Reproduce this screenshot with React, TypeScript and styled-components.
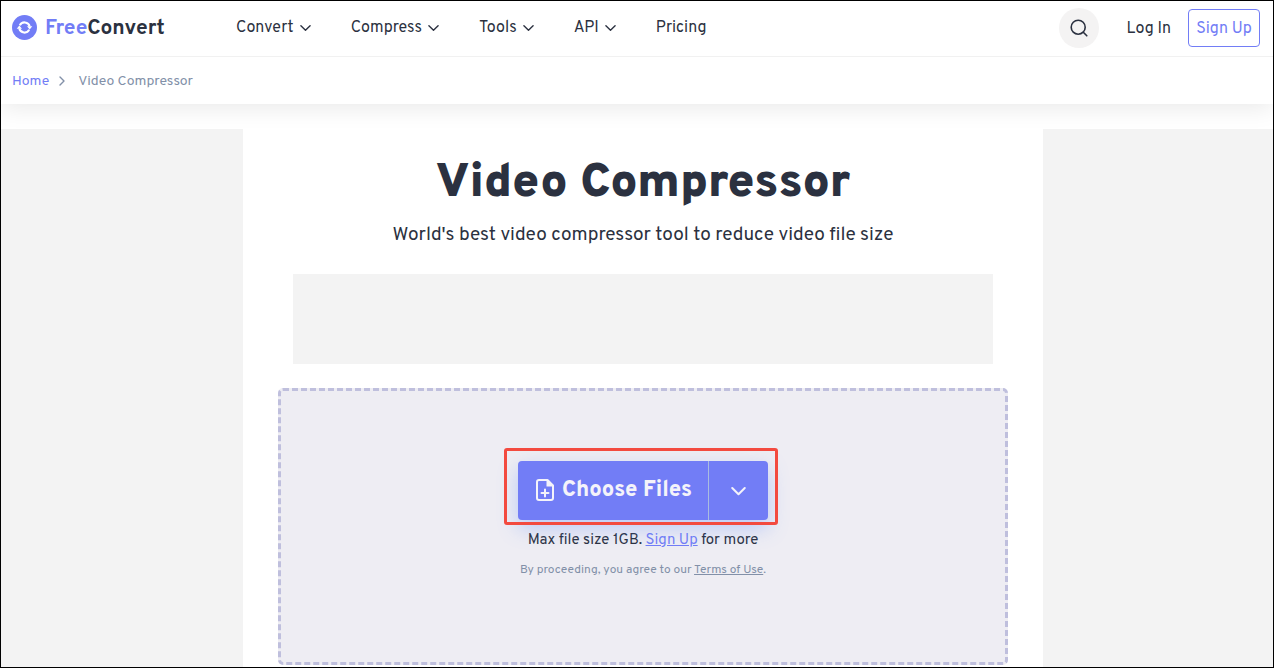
import React from "react";
import styled, { createGlobalStyle } from "styled-components";

const purple = "#727df6";
const ink = "#2b3140";
const muted = "#8290a8";

const GlobalStyle = createGlobalStyle`
  *, *::before, *::after { box-sizing: border-box; }
  body {
    margin: 0;
    background: #fff;
    color: ${ink};
    font-family: Overpass, Roboto, "Liberation Sans", sans-serif;
    font-size: 16px;
  }
  button, a { font: inherit; color: inherit; }
`;

const Page = styled.div`
  display: flex;
  flex-direction: column;
  min-height: 100vh;
  border: 1px solid #000;
`;

const TopBar = styled.header`
  position: relative;
  display: flex;
  align-items: center;
  height: 56px;
  padding: 0 13px 2px 11px;
  border-bottom: 1px solid #f1f1f1;
  background: #fff;
`;

const Brand = styled.a`
  display: flex;
  align-items: center;
  gap: 8px;
  width: 224px;
  font-size: 21px;
  line-height: 24px;
  font-weight: 700;
  text-decoration: none;
`;

const BrandName = styled.span`
  padding-top: 3px;
`;

const Accent = styled.span`
  color: ${purple};
`;

const Nav = styled.nav`
  display: flex;
  flex: 1;
  gap: 40px;
`;

const NavButton = styled.button`
  display: flex;
  align-items: center;
  gap: 6px;
  padding: 0;
  border: 0;
  background: none;
  line-height: 24px;
  cursor: pointer;
`;

const Account = styled.div`
  display: flex;
  align-items: center;
`;

const SearchButton = styled.button`
  display: grid;
  place-items: center;
  width: 40px;
  height: 40px;
  padding: 0;
  margin-right: 28px;
  border: 0;
  border-radius: 50%;
  background: #f4f3f3;
`;

const LogIn = styled.a`
  margin-right: 17px;
  padding-top: 2px;
  text-decoration: none;
`;

const SignUp = styled.a`
  display: grid;
  place-items: center;
  width: 72px;
  height: 38px;
  padding-top: 2px;
  border: 1px solid ${purple};
  border-radius: 4px;
  && { color: ${purple}; }
  text-decoration: none;
`;

const Breadcrumbs = styled.nav`
  display: flex;
  align-items: center;
  height: 47px;
  padding: 2px 11px 0;
  color: ${muted};
  font-size: 14px;
  box-shadow: 0 4px 24px rgba(0, 0, 0, 0.09);
  a { color: ${purple}; text-decoration: none; }
  svg { margin: 0 12px 2px 9px; }
`;

const Columns = styled.main`
  display: grid;
  flex: 1;
  grid-template-columns: minmax(0, 242fr) minmax(0, 800px) minmax(0, 230fr);
  margin-top: 25px;
`;

const SideAd = styled.aside`
  background: #f3f3f3;
`;

const Content = styled.section`
  display: flex;
  flex-direction: column;
  align-items: center;
  padding: 23px 35px 2px;
`;

const Title = styled.h1`
  margin: 0;
  font-size: 48px;
  line-height: 64px;
  font-weight: 900;
  text-align: center;
`;

const Subtitle = styled.p`
  margin: 7px 0 26px;
  font-size: 19px;
  line-height: 25px;
  text-align: center;
`;

const BannerAd = styled.div`
  width: 100%;
  max-width: 700px;
  height: 90px;
  background: #f3f3f3;
`;

const DropZone = styled.div`
  display: flex;
  flex-direction: column;
  align-items: center;
  width: 100%;
  margin-top: 24px;
  padding: 70px 16px 82px;
  border: 3px dashed #bfbfdd;
  border-radius: 5px;
  background: #eeedf3;
`;

const SplitButton = styled.div`
  position: relative;
  display: flex;
  width: 250px;
  height: 59px;
  border-radius: 4px;
  background: ${purple};
  box-shadow: 0 8px 20px rgba(90, 135, 255, 0.35);
`;

const Highlight = styled.div`
  position: absolute;
  inset: -13px -10px -5px -14px;
  border: 3px solid #f34a3f;
  border-radius: 3px;
  pointer-events: none;
`;

const ChooseButton = styled.button`
  display: flex;
  flex: 1;
  align-items: center;
  justify-content: center;
  gap: 8px;
  padding: 0 0 2px 2px;
  border: 0;
  background: none;
  color: #f4f3fa;
  font-size: 22px;
  line-height: 28px;
  font-weight: 800;
  white-space: nowrap;
`;

const ChooseLabel = styled.span`
  padding-top: 2px;
`;

const MoreButton = styled.button`
  display: grid;
  place-items: center;
  width: 60px;
  padding: 0;
  border: 0;
  border-left: 1px solid #a9bce0;
  background: none;
  color: #f4f3fa;
`;

const Limit = styled.p`
  margin: 11px 0 9px;
  font-size: 15px;
  line-height: 20px;
  a { color: ${purple}; }
`;

const Terms = styled.p`
  margin: 0;
  color: ${muted};
  font-size: 12px;
  line-height: 20px;
`;

function Chevron({ width = 11, stroke = 1.5 }: { width?: number; stroke?: number }) {
  return (
    <svg width={width} height={width} viewBox="0 0 12 12" fill="none" stroke="currentColor" strokeWidth={stroke} strokeLinecap="round" strokeLinejoin="round" aria-hidden="true">
      <path d="M1 4l5 5 5-5" />
    </svg>
  );
}

function Logo() {
  return (
    <svg width="25" height="25" viewBox="0 0 25 25" aria-hidden="true">
      <circle cx="12.5" cy="12.5" r="12.5" fill={purple} />
      <g fill="none" stroke="#fff" strokeWidth="2.1">
        <path d="M7.8 10.4A5.3 5.3 0 0 1 17.7 11.4" />
        <path d="M17.2 14.6A5.3 5.3 0 0 1 7.3 13.6" />
      </g>
      <path d="M15 11.2h5.3l-2.6 3.2zM10 13.8H4.7l2.6-3.2z" fill="#fff" />
    </svg>
  );
}

const menus = ["Convert", "Compress", "Tools", "API"];

export default function App() {
  return (
    <Page>
      <GlobalStyle />
      <TopBar>
        <Brand href="#">
          <Logo />
          <BrandName><Accent>Free</Accent>Convert</BrandName>
        </Brand>
        <Nav aria-label="Main">
          {menus.map((name) => (
            <NavButton key={name}>
              {name}
              <Chevron />
            </NavButton>
          ))}
          <NavButton>Pricing</NavButton>
        </Nav>
        <Account>
          <SearchButton aria-label="Search">
            <svg width="18" height="18" viewBox="0 0 18 18" fill="none" stroke="currentColor" strokeWidth="1.6" strokeLinecap="round" aria-hidden="true">
              <circle cx="8.2" cy="8.2" r="7" />
              <path d="M13.3 13.3l3.5 3.5" />
            </svg>
          </SearchButton>
          <LogIn href="#">Log In</LogIn>
          <SignUp href="#">Sign Up</SignUp>
        </Account>
      </TopBar>
      <Breadcrumbs aria-label="Breadcrumb">
        <a href="#">Home</a>
        <svg width="8" height="10" viewBox="0 0 8 10" fill="none" stroke="currentColor" strokeWidth="1.4" strokeLinecap="round" strokeLinejoin="round" aria-hidden="true">
          <path d="M2 1l4 4-4 4" />
        </svg>
        <span>Video Compressor</span>
      </Breadcrumbs>
      <Columns>
        <SideAd />
        <Content>
          <Title>Video Compressor</Title>
          <Subtitle>World's best video compressor tool to reduce video file size</Subtitle>
          <BannerAd />
          <DropZone>
            <SplitButton>
              <ChooseButton>
                <svg width="18" height="22" viewBox="0 0 18 22" aria-hidden="true">
                  <path d="M11.5 1H3a2 2 0 0 0-2 2v16a2 2 0 0 0 2 2h12a2 2 0 0 0 2-2V6.5zM9 10.5v7M5.500 14h7" fill="none" stroke="currentColor" strokeWidth="2" strokeLinejoin="round" strokeLinecap="round" />
                  <path d="M10.500 1v6.500H17V6l-5-5z" fill="currentColor" />
                </svg>
                <ChooseLabel>Choose Files</ChooseLabel>
              </ChooseButton>
              <MoreButton aria-label="More sources">
                <Chevron width={15} stroke={1.6} />
              </MoreButton>
              <Highlight />
            </SplitButton>
            <Limit>Max file size 1GB. <a href="#">Sign Up</a> for more</Limit>
            <Terms>By proceeding, you agree to our <a href="#">Terms of Use</a>.</Terms>
          </DropZone>
        </Content>
        <SideAd />
      </Columns>
    </Page>
  );
}
